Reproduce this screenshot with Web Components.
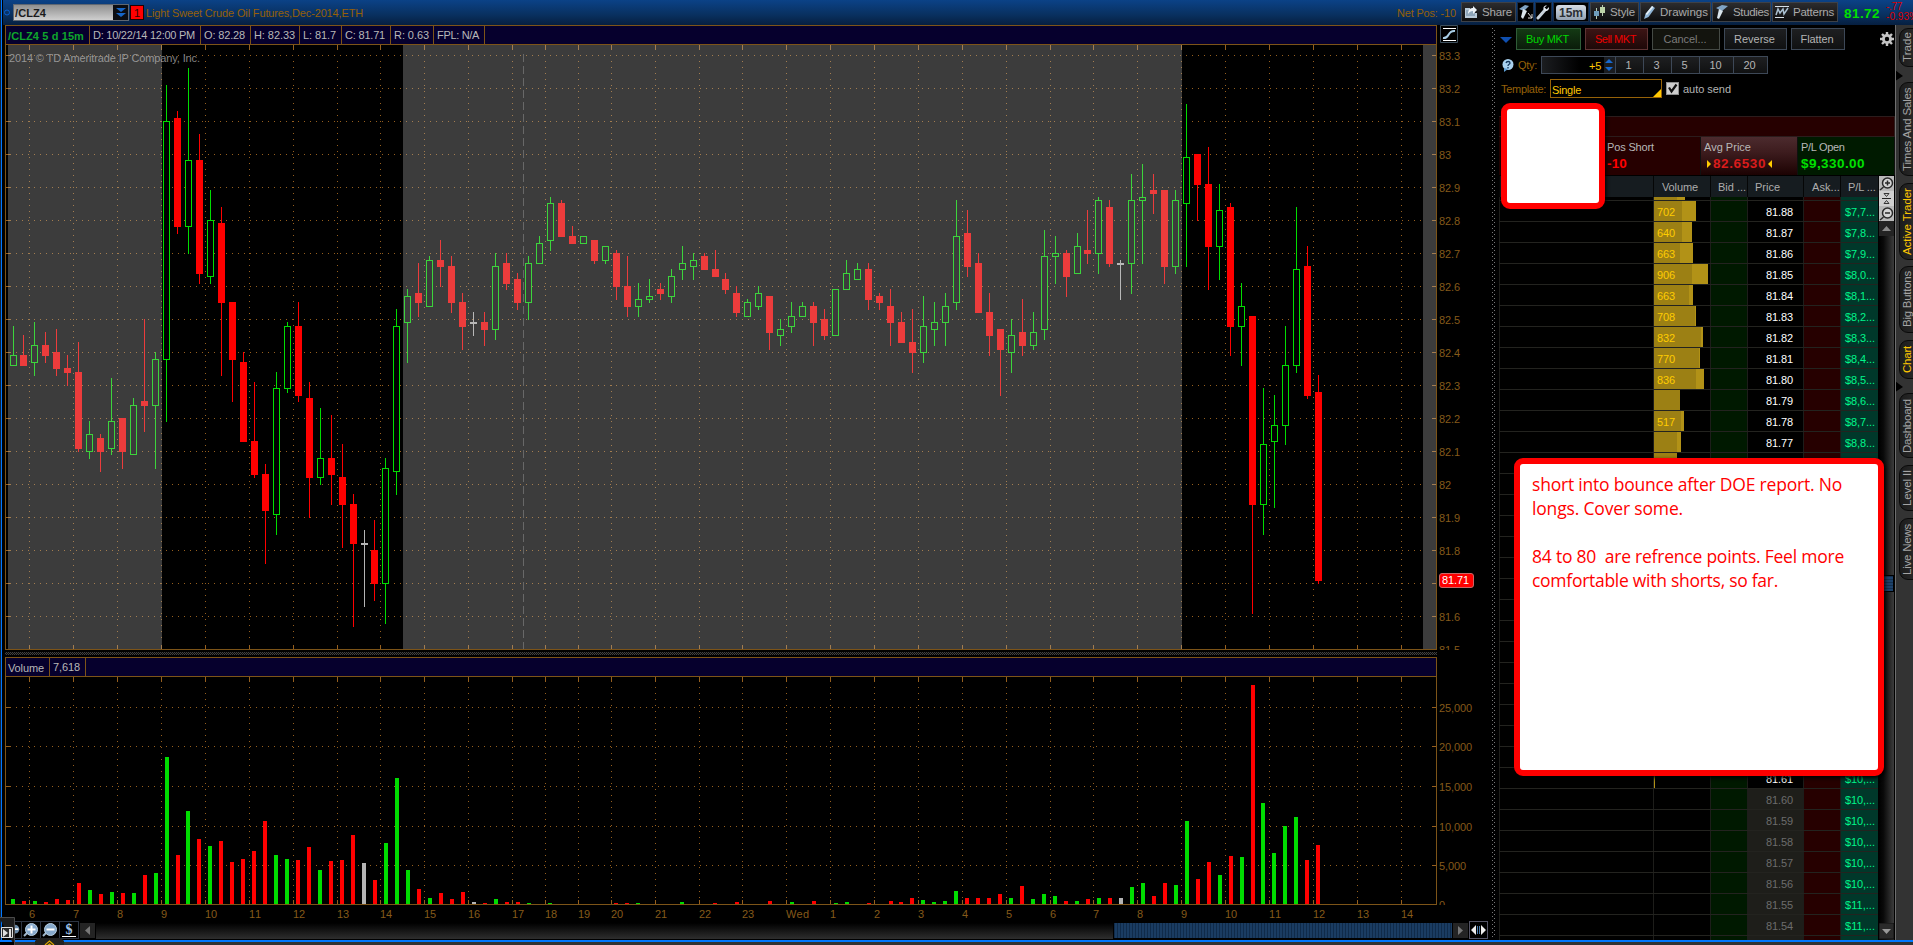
<!DOCTYPE html>
<html lang="en">
<head>
<meta charset="UTF-8">
<title>Chart - /CLZ4</title>
<style>
    html, body {
        margin: 0;
        background: #000;
    }

    body {
        width: 1913px;
        height: 945px;
        overflow: hidden;
        font: 11px "Liberation Sans", Arial, sans-serif;
        color: #b8b8b8;
        --line: #7d5418;
        --brown: #855a1a;
        --orange: #966008;
        --blue: #0078ff;
    }
</style>
</head>
<body>
<trade-app></trade-app>

<script>
    // each bar: [type, high, body top, body bottom, low, top of the volume bar (0 = none)]
    const bars = [
        ['g', 326, 355, 366, 366, 899], ['r', 335, 355, 366, 366, 901], ['g', 322, 345, 363, 376, 901],
        ['r', 332, 345, 356, 363, 902], ['r', 329, 352, 369, 376, 899], ['r', 355, 368, 373, 386, 900],
        ['r', 342, 372, 449, 452, 883], ['g', 421, 434, 452, 459, 890], ['r', 434, 438, 452, 472, 894],
        ['g', 378, 421, 449, 455, 892], ['r', 418, 418, 452, 469, 893], ['g', 398, 405, 455, 455, 893],
        ['r', 319, 401, 406, 432, 875], ['g', 352, 359, 406, 469, 873], ['g', 85, 121, 360, 422, 757],
        ['r', 111, 118, 227, 234, 855], ['g', 68, 160, 227, 254, 811], ['r', 134, 160, 274, 284, 839],
        ['g', 190, 220, 277, 284, 846], ['r', 207, 223, 303, 376, 841], ['r', 302, 302, 360, 402, 862],
        ['r', 352, 362, 442, 442, 859], ['r', 382, 441, 475, 478, 851], ['r', 464, 474, 511, 564, 821],
        ['g', 372, 388, 515, 535, 855], ['g', 322, 326, 389, 393, 859], ['r', 302, 326, 396, 402, 860],
        ['r', 382, 398, 478, 518, 847], ['g', 408, 458, 478, 485, 870], ['r', 415, 458, 475, 505, 861],
        ['r', 444, 477, 505, 548, 860], ['r', 494, 504, 544, 627, 835], ['d', 530, 543, 545, 607, 863],
        ['r', 520, 550, 584, 601, 880], ['g', 458, 468, 584, 624, 843], ['g', 309, 326, 472, 495, 778],
        ['g', 289, 296, 323, 363, 870], ['r', 263, 293, 303, 317, 889], ['g', 256, 260, 307, 307, 898],
        ['r', 240, 260, 267, 287, 893], ['r', 256, 266, 303, 313, 899], ['r', 293, 302, 327, 350, 892],
        ['d', 312, 322, 324, 336, 902], ['r', 312, 322, 330, 346, 903], ['g', 253, 266, 330, 340, 899],
        ['r', 253, 263, 284, 290, 902], ['r', 273, 279, 303, 310, 902], ['g', 256, 263, 303, 320, 903],
        ['g', 236, 243, 264, 264, 0], ['g', 197, 203, 241, 251, 903], ['r', 200, 203, 237, 237, 0],
        ['r', 226, 236, 244, 244, 0], ['g', 236, 236, 244, 244, 0], ['r', 240, 240, 261, 264, 0],
        ['g', 246, 246, 261, 264, 0], ['r', 250, 253, 287, 300, 903], ['r', 256, 286, 307, 317, 903],
        ['g', 283, 299, 307, 317, 903], ['g', 279, 296, 300, 303, 0], ['r', 283, 289, 294, 300, 0],
        ['g', 269, 276, 297, 303, 0], ['g', 246, 263, 270, 280, 902], ['g', 253, 260, 267, 280, 0],
        ['r', 253, 256, 270, 270, 0], ['r', 250, 269, 277, 277, 903], ['r', 273, 279, 290, 294, 0],
        ['r', 286, 293, 313, 317, 902], ['g', 299, 302, 317, 317, 0], ['g', 286, 293, 307, 310, 0],
        ['r', 296, 296, 333, 350, 901], ['g', 319, 329, 336, 346, 0], ['g', 302, 316, 327, 333, 902],
        ['g', 302, 306, 317, 317, 0], ['r', 302, 306, 323, 346, 901], ['r', 309, 319, 336, 340, 0],
        ['g', 289, 289, 336, 336, 903], ['g', 260, 273, 290, 290, 902], ['g', 263, 269, 280, 280, 0],
        ['r', 263, 269, 300, 310, 903], ['r', 293, 296, 303, 310, 0], ['r', 289, 306, 323, 346, 901],
        ['r', 312, 322, 343, 343, 902], ['r', 309, 342, 353, 373, 898], ['g', 296, 326, 353, 363, 900],
        ['g', 302, 322, 330, 346, 902], ['g', 293, 306, 323, 346, 901], ['g', 200, 236, 303, 310, 891],
        ['r', 210, 233, 267, 277, 898], ['r', 253, 263, 313, 313, 898], ['r', 293, 312, 336, 356, 898],
        ['r', 329, 329, 350, 396, 894], ['g', 319, 335, 353, 373, 898], ['r', 299, 332, 346, 356, 886],
        ['g', 312, 332, 346, 350, 899], ['g', 230, 256, 330, 340, 894], ['g', 236, 253, 257, 284, 896],
        ['r', 250, 253, 277, 297, 901], ['g', 233, 246, 274, 274, 901], ['r', 210, 250, 254, 264, 899],
        ['g', 197, 200, 254, 274, 898], ['r', 200, 207, 264, 267, 898], ['d', 260, 263, 265, 300, 898],
        ['g', 174, 200, 264, 294, 887], ['g', 164, 197, 201, 264, 883], ['r', 174, 190, 194, 214, 896],
        ['r', 190, 190, 267, 284, 883], ['g', 190, 200, 267, 274, 885], ['g', 104, 157, 204, 267, 821],
        ['r', 154, 154, 185, 221, 879], ['r', 147, 184, 247, 290, 862], ['g', 184, 210, 247, 280, 875],
        ['r', 203, 207, 327, 356, 856], ['g', 283, 306, 327, 366, 857], ['r', 316, 316, 505, 614, 685],
        ['g', 388, 444, 505, 535, 803], ['g', 395, 425, 442, 508, 853], ['g', 326, 365, 426, 445, 826],
        ['g', 207, 269, 366, 373, 817], ['r', 246, 266, 396, 399, 860], ['r', 375, 392, 581, 584, 845]
    ];

    const barColors = { g: '#00dd00', r: '#ff0000', d: '#b4b4b4' };

    const hours = [
        [29, '6'], [73, '7'], [117, '8'], [161, '9'], [205, '10'], [249, '11'], [293, '12'], [337, '13'],
        [380, '14'], [424, '15'], [468, '16'], [512, '17'], [545, '18'], [578, '19'], [611, '20'],
        [655, '21'], [699, '22'], [742, '23'], [786, 'Wed'], [830, '1'], [874, '2'], [918, '3'],
        [962, '4'], [1006, '5'], [1050, '6'], [1093, '7'], [1137, '8'], [1181, '9'], [1225, '10'],
        [1269, '11'], [1313, '12'], [1357, '13'], [1401, '14']
    ];

    // the bar pitch is a bit less than 11px
    const candleX = i => i === 0 ? 13 : 12 + 11 * i - Math.floor(i / 32.5);
    const volumeX = i => 11 + 11 * i - Math.floor((i + 16.5) / 32.5);

    // digits are 6px wide, points and commas 3px
    const numWidth = s => [...s].reduce((w, c) => w + (/[0-9]/.test(c) ? 6 : 3), 0);

    const rect = (x, y, w, h, fill) => `<rect x="${x}" y="${y}" width="${w}" height="${h}" fill="${fill}"/>`;

    function axisLabel(y, text) {
        return `<text x="1439" y="${y + 5}" textLength="${numWidth(text)}">${text}</text>`;
    }

    // dotted grid with ticks on the four sides
    function grid(top, bottom, rows, firstDot) {
        let s = '';
        hours.forEach(([x]) => {
            s += `<path d="M${x + .5} ${firstDot}V${bottom - 6}" stroke-dasharray="1 5"/>`;
            s += `<path d="M${x + .5} ${top}v5M${x + .5} ${bottom - 4}v4"/>`;
        });
        rows.forEach(y => {
            s += `<path d="M16 ${y + .5}H1423" stroke-dasharray="1 5"/>`;
            s += `<path d="M6 ${y + .5}h5M1432 ${y + .5}h4"/>`;
        });
        return `<g stroke="#965f1e" fill="none">${s}</g>`;
    }

    const svgStyle = `
        :host { display: block; }
        svg { display: block; shape-rendering: crispEdges; }
        text { font: 11px "Liberation Sans", Arial, sans-serif; fill: var(--brown); }
    `;

    // text that is spaced out or squeezed to a given width
    class FitLabel extends HTMLElement {
        constructor() {
            super();
            this.attachShadow({ mode: 'open' });
            this.shadowRoot.innerHTML = `
            <style>
                :host { display: inline-block; white-space: nowrap; }
                slot { white-space: pre; }
            </style>
            <slot></slot>
            `;
        }

        connectedCallback() {
            const ctx = document.createElement('canvas').getContext('2d');
            ctx.font = getComputedStyle(this).font;
            const text = this.textContent;
            const gap = (Number(this.getAttribute('w')) - ctx.measureText(text).width) / text.length;
            this.style.letterSpacing = gap.toFixed(3) + 'px';
        }
    }

    class ToolButton extends HTMLElement {
        constructor() {
            super();
            this.attachShadow({ mode: 'open' });
            this.shadowRoot.innerHTML = `
            <style>
                :host {
                    display: flex;
                    align-items: center;
                    box-sizing: border-box;
                    height: 20px;
                    padding-left: 2px;
                    gap: 4px;
                    border: 1px solid #3d4148;
                    background: linear-gradient(#2c2c2e, #0d0d0e);
                    font-size: 11.5px;
                    color: #a9a9a9;
                    overflow: hidden;
                }
                :host([dark]) { background: #000; border-color: #1b2c44; }
                ::slotted(svg) { flex: none; }
            </style>
            <slot></slot>
            `;
        }
    }

    class TopBar extends HTMLElement {
        constructor() {
            super();
            this.attachShadow({ mode: 'open' });
            this.shadowRoot.innerHTML = `
            <style>
                :host {
                    display: flex;
                    height: 25px;
                    box-sizing: border-box;
                    background: linear-gradient(#0b4287, #09305f 60%, #061f40);
                    color: var(--orange);
                }
                .dot { width: 10px; }
                .symbol {
                    display: flex;
                    box-sizing: border-box;
                    width: 116px;
                    height: 17px;
                    margin-top: 4px;
                    border: 1px solid #5f6772;
                    background: linear-gradient(#8f8f8f, #cfcfcf);
                    color: #1b1b1b;
                    font-weight: bold;
                }
                .symbol span { width: 100px; line-height: 17px; padding-left: 1px; box-sizing: border-box; }
                .symbol svg { background: #0b0d12; }
                .link {
                    width: 12px;
                    height: 13px;
                    margin: 5px 1px 0 1px;
                    border: 1px solid #200;
                    background: #f00;
                    color: #300;
                    text-align: center;
                    line-height: 14px;
                }
                .title { margin-left: 1px; line-height: 27px; flex: 1; }
                .net { line-height: 27px; margin-right: 5px; }
                .tools { display: flex; margin-top: 2px; gap: 1px; }
                .period {
                    display: block;
                    width: 30px;
                    height: 15px;
                    border-radius: 3px;
                    background: linear-gradient(#d5dde6, #93a2b2);
                    color: #2b2f35;
                    font: bold 12px/16px "Liberation Sans", Arial, sans-serif;
                    text-align: center;
                }
                .last { margin-left: 6px; width: 42px; color: #00e000; font: bold 13.5px/27px "Liberation Sans", Arial, sans-serif; }
                .change { width: 27px; overflow: hidden; color: #d00; font-size: 10px; line-height: 10px; padding-top: 2px; }
                .change fit-label { display: block; height: 10px; }
            </style>
            <svg class="dot" height="25"><circle cx="4" cy="12.5" r="2.5" fill="none" stroke="#0a5fd0"/></svg>
            <div class="symbol"><span><fit-label w="31">/CLZ4</fit-label></span>
                <svg width="15" height="15"><path d="M3 3h10l-5 4zM3 8h10l-5 4z" fill="#1666c8"/></svg>
            </div>
            <div class="link">1</div>
            <div class="title"><fit-label w="217">Light Sweet Crude Oil Futures,Dec-2014,ETH</fit-label></div>
            <div class="net"><fit-label w="59">Net Pos: -10</fit-label></div>
            <div class="tools">
                <tool-button style="width:55px">
                    <svg width="14" height="14"><path d="M1 3h5v2H3v6h8V8h2v5H1z" fill="#b9cad9"/><path d="M2 5h9v6H2z" fill="#8fa6ba"/><path d="M4 9c0-4 2-6 5-6V1l4 4-4 4V6C7 6 5 7 4 9z" fill="#eef3f7"/></svg>
                    <fit-label w="30">Share</fit-label>
                </tool-button>
                <tool-button dark style="width:17px;padding:0">
                    <svg width="15" height="16"><path d="M1 5l6-4 4 1-5 5z" fill="#7fa3c4"/><path d="M5 5l4 2-4 8-2-2z" fill="#d9e4ec"/><path d="M10 9l4 5M14 10v4h-4" stroke="#ddd" fill="none"/></svg>
                </tool-button>
                <tool-button dark style="width:17px;padding:0">
                    <svg width="15" height="16"><path d="M2 14l7-8" stroke="#c9d3dc" stroke-width="3" stroke-linecap="round"/><path d="M13 3l-2.500 2.500-2-2L11 1.500C8 1 6.500 4 8 6s5.500 1 5-3z" fill="#e5ebf0"/></svg>
                </tool-button>
                <tool-button dark style="width:36px"><span class="period">15m</span></tool-button>
                <tool-button style="width:49px">
                    <svg width="13" height="16"><path d="M3.500 4v11M9.500 1v11" stroke="#b6c9b0"/><path d="M1 7h5v5H1z" fill="#6f9dbb"/><path d="M7 3h5v6H7z" fill="#bcd3a8"/></svg>
                    <fit-label w="25">Style</fit-label>
                </tool-button>
                <tool-button style="width:71px">
                    <svg width="13" height="15"><path d="M1 14l1.500-5L9 1l3 2-6.500 9z" fill="#8fb5d6"/><path d="M2.500 9L9 1l1.500 1-6.500 8z" fill="#e3eef6"/></svg>
                    <fit-label w="48">Drawings</fit-label>
                </tool-button>
                <tool-button style="width:59px">
                    <svg width="14" height="16"><path d="M1 4l6-3 6 1-6 5z" fill="#7fa3c4"/><path d="M4 5l4 2-4 8-2-1z" fill="#d9e4ec"/></svg>
                    <fit-label w="36">Studies</fit-label>
                </tool-button>
                <tool-button style="width:66px">
                    <svg width="14" height="14"><path d="M0 1.500h14M0 12.500h9" stroke="#d5dde4"/><path d="M1 10l2-6 2 4 3-4 1 5 4-6" stroke="#a9bfd0" stroke-width="1.500" fill="none"/></svg>
                    <fit-label w="41">Patterns</fit-label>
                </tool-button>
            </div>
            <div class="last"><fit-label w="36">81.72</fit-label></div>
            <div class="change"><fit-label w="16">-.77</fit-label><fit-label w="32">-0.93%</fit-label></div>
            `;
        }
    }

    // row of boxed values above a plot
    class PlotHeader extends HTMLElement {
        constructor() {
            super();
            this.attachShadow({ mode: 'open' });
            this.shadowRoot.innerHTML = `
            <style>
                :host {
                    display: flex;
                    box-sizing: border-box;
                    width: 1432px;
                    height: 20px;
                    border: 1px solid var(--line);
                    background: #06002d;
                }
                ::slotted(span) {
                    box-sizing: border-box;
                    height: 18px;
                    line-height: 19px;
                    padding-left: 3px;
                    border-right: 1px solid var(--line);
                }
            </style>
            <slot></slot>
            `;
        }
    }

    class PriceChart extends HTMLElement {
        constructor() {
            super();
            this.attachShadow({ mode: 'open' });

            const rows = [];
            let labels = '';
            for (let i = 0; i <= 18; i++) {
                const y = 55 + 33 * i;
                if (i < 18) rows.push(y);
                // 81.7 is covered by the last price
                if (i !== 16) labels += axisLabel(y, String(Number((83.3 - i / 10).toFixed(1))));
            }

            const candles = bars.map(([type, high, top, bottom, low], i) => {
                const x = candleX(i);
                const color = barColors[type];
                if (type === 'g') {
                    return rect(x, high, 1, top - high, color) + rect(x, bottom, 1, low - bottom, color) +
                        `<rect x="${x - 2.5}" y="${top + .5}" width="6" height="${bottom - top - 1}" fill="#000" stroke="${color}"/>`;
                }
                return rect(x, high, 1, low - high, color) + rect(x - 3, top, 7, bottom - top, color);
            }).join('');

            // the night sessions are veiled by a grey layer
            const night = [[8, 154], [403, 779], [1423, 13]]
                .map(([x, w]) => rect(x, 45, w, 604, 'rgba(193,193,193,.31)')).join('');

            this.shadowRoot.innerHTML = `
            <style>${svgStyle}</style>
            <svg width="1484" height="605" viewBox="5 45 1484 605">
                ${grid(45, 649, rows, 61)}
                <path d="M523.5 54V649" stroke="#414141" stroke-dasharray="8 4"/>
                <text x="9" y="62" textLength="191" style="fill:#828282">2014 © TD Ameritrade IP Company, Inc.</text>
                ${candles}
                ${night}
                ${rect(5, 45, 1, 605, '#7d5418')}${rect(1436, 45, 1, 605, '#7d5418')}${rect(5, 649, 1432, 1, '#7d5418')}
                ${labels}
                <rect x="1439.500" y="573.500" width="34" height="14" rx="2.500" fill="#f00" stroke="#c66" shape-rendering="auto"/>
                <text x="1442" y="584" textLength="27" style="fill:#fff">81.71</text>
            </svg>
            `;
        }
    }

    class VolumeChart extends HTMLElement {
        constructor() {
            super();
            this.attachShadow({ mode: 'open' });

            const rows = [[707, '25,000'], [746, '20,000'], [786, '15,000'], [826, '10,000'], [865, '5,000']];
            const columns = bars.map((bar, i) => bar[5] ? rect(volumeX(i), bar[5], 4, 904 - bar[5], barColors[bar[0]]) : '').join('');

            this.shadowRoot.innerHTML = `
            <style>${svgStyle}</style>
            <svg width="1484" height="228" viewBox="5 677 1484 228">
                ${grid(677, 904, rows.map(r => r[0]), 687)}
                ${columns}
                ${rect(5, 677, 1, 228, '#7d5418')}${rect(1436, 677, 1, 228, '#7d5418')}${rect(5, 904, 1432, 1, '#7d5418')}
                ${rows.map(([y, t]) => axisLabel(y, t)).join('')}
                ${axisLabel(904, '0')}
            </svg>
            `;
        }
    }

    class TimeAxis extends HTMLElement {
        constructor() {
            super();
            this.attachShadow({ mode: 'open' });
            this.shadowRoot.innerHTML = `
            <style>${svgStyle}</style>
            <svg width="1484" height="16" viewBox="5 905 1484 16">
                ${hours.map(([x, t]) => `<text x="${x}" y="918" textLength="${t === 'Wed' ? 23 : numWidth(t)}">${t}</text>`).join('')}
            </svg>
            `;
        }
    }

    class TimeScroll extends HTMLElement {
        constructor() {
            super();
            this.attachShadow({ mode: 'open' });
            this.shadowRoot.innerHTML = `
            <style>
                :host { display: flex; height: 19px; margin: 0 4px 0 10px; }
                svg { display: block; flex: none; }
                .icon { box-sizing: border-box; width: 19px; height: 18px; border: 1px solid #2c3442; border-width: 1px 1px 1px 0; background: #000; }
                .icon.cut { width: 7px; }
                .arrow { width: 15px; height: 15px; margin: 2px 1px 0 1px; background: #242424; }
                .track { flex: 1; display: flex; justify-content: flex-end; margin-top: 2px; height: 16px; background: linear-gradient(#000, #2e2e2e); }
                .thumb { width: 338px; height: 15px; background: repeating-linear-gradient(90deg, #102b4a 0 1px, #1a3c62 1px 3px); box-shadow: 0 0 0 1px #000; }
            </style>
            <svg class="icon cut" viewBox="0 0 7 18"><circle cx="0" cy="8" r="5" fill="#6a8aa8"/><path d="M0 8h4" stroke="#fff" stroke-width="2"/></svg>
            <svg class="icon" viewBox="0 0 18 16"><path d="M5 11l-3 3" stroke="#9fb6cc" stroke-width="2"/><circle cx="9.500" cy="7.500" r="6" fill="#86a9cc" stroke="#b9d0e4"/><path d="M9.500 3.500v8M5.500 7.500h8" stroke="#fff" stroke-width="2"/></svg>
            <svg class="icon" viewBox="0 0 18 16"><path d="M5 11l-3 3" stroke="#9fb6cc" stroke-width="2"/><circle cx="9.500" cy="7.500" r="6" fill="#86a9cc" stroke="#b9d0e4"/><path d="M5.500 7.500h8" stroke="#fff" stroke-width="2"/></svg>
            <svg class="icon" viewBox="0 0 18 16"><text x="5.500" y="11.500" font-family="Liberation Serif, serif" font-weight="bold" font-size="14" fill="#9fc3e6">$</text><path d="M2 14.500h14" stroke="#fff"/></svg>
            <svg class="arrow" viewBox="0 0 15 15"><path d="M10 3v9L5 7.500z" fill="#777"/></svg>
            <div class="track"><div class="thumb"></div></div>
            <svg class="arrow" viewBox="0 0 15 15"><path d="M5 3v9l5-4.500z" fill="#777"/></svg>
            <svg class="icon" style="border-width:1px;border-color:#556" viewBox="0 0 17 16"><path d="M1 8l5-5v10zM16 8l-5-5v10z" fill="#eee"/><path d="M7.500 4v8M9.500 4v8" stroke="#4b7dae"/></svg>
            `;
        }
    }

    class ChartArea extends HTMLElement {
        constructor() {
            super();
            this.attachShadow({ mode: 'open' });
            this.shadowRoot.innerHTML = `
            <style>
                :host { display: flex; flex-direction: column; width: 1489px; padding-left: 2px; box-sizing: border-box; }
                .head { display: flex; gap: 3px; height: 20px; }
                .sym { color: #0fa52c; font-weight: bold; }
                .split {
                    width: 1432px;
                    height: 3px;
                    margin: 2px 0;
                    background: repeating-conic-gradient(#3f3f3f 0 25%, #0a0a0a 0 50%) 0 0 / 2px 2px;
                }
            </style>
            <div class="head">
                <plot-header>
                    <span class="sym" style="width:84px;padding-left:2px;line-height:21px"><fit-label w="76">/CLZ4 5 d 15m</fit-label></span>
                    <span style="width:111px"><fit-label w="102">D: 10/22/14 12:00 PM</fit-label></span>
                    <span style="width:50px"><fit-label w="41">O: 82.28</fit-label></span>
                    <span style="width:49px"><fit-label w="41">H: 82.33</fit-label></span>
                    <span style="width:42px"><fit-label w="33">L: 81.7</fit-label></span>
                    <span style="width:49px"><fit-label w="40">C: 81.71</fit-label></span>
                    <span style="width:43px"><fit-label w="35">R: 0.63</fit-label></span>
                    <span style="width:51px"><fit-label w="42">FPL: N/A</fit-label></span>
                </plot-header>
                <svg width="19" height="19"><path d="M.5.5h17v17H.5z" fill="#000" stroke="#3e4f5c"/><path d="M3 3.500h13M3 15.500h13" stroke="#fff"/><path d="M3 13c7 1 4-8 12-7" stroke="#a9cfe8" stroke-width="2" fill="none"/></svg>
            </div>
            <price-chart></price-chart>
            <div class="split"></div>
            <plot-header>
                <span style="width:44px;padding-left:2px;line-height:21px"><fit-label w="36">Volume</fit-label></span>
                <span style="width:36px"><fit-label w="27">7,618</fit-label></span>
            </plot-header>
            <volume-chart></volume-chart>
            <time-axis></time-axis>
            <time-scroll></time-scroll>
            `;
        }
    }

    // two staggered columns of dots
    class PanelGrip extends HTMLElement {
        constructor() {
            super();
            this.attachShadow({ mode: 'open' });
            this.shadowRoot.innerHTML = `
            <style>
                :host { display: block; width: 3px; margin: 3px 4px 2px 0; }
                svg { display: block; }
            </style>
            <svg width="3" height="910">
                <path d="M.5 0V910" stroke="#777" stroke-dasharray="1 3"/>
                <path d="M2.500 2V910" stroke="#777" stroke-dasharray="1 3"/>
            </svg>
            `;
        }
    }

    class OrderButton extends HTMLElement {
        constructor() {
            super();
            this.attachShadow({ mode: 'open' });
            this.shadowRoot.innerHTML = `
            <style>
                :host {
                    display: flex;
                    align-items: center;
                    justify-content: center;
                    box-sizing: border-box;
                    height: 22px;
                    padding-right: 2px;
                    border: 1px solid #3d4857;
                    background: linear-gradient(#1e1f21, #101112);
                    color: #b4b4b4;
                }
                :host([kind="buy"]) { background: linear-gradient(#143a14, #0a1c0a); border-color: #2f5c38; color: #00d800; }
                :host([kind="sell"]) { background: linear-gradient(#3c1414, #1e0808); border-color: #5e3434; color: #f00000; }
                :host([kind="off"]) { background: #13140e; border-color: #454a45; color: #7c7c7c; }
                :host([kind="qty"]) { height: 18px; border-left-width: 0; }
            </style>
            <slot></slot>
            `;
        }
    }

    class PriceLadder extends HTMLElement {
        constructor() {
            super();
            this.attachShadow({ mode: 'open' });

            // [label, full bar, darker part of the bar]
            const volumes = [
                ['702', 42, 28], ['640', 38, 28], ['663', 39, 26], ['906', 54, 38], ['663', 39, 35],
                ['708', 42, 41], ['832', 49, 47], ['770', 46, 45], ['836', 50, 42], ['', 26, 26],
                ['517', 30, 27], ['', 27, 23], ['', 23, 23]
            ];
            const entry = 8265.3;
            let rows = this.row('', ['', 31, 23], '', false);
            for (let i = 0; i < 35; i++) {
                const cents = 8188 - i;
                const profit = Math.round((entry - cents) * 100).toLocaleString('en-US');
                rows += this.row((cents / 100).toFixed(2), volumes[i] || ['', i === 27 ? 1 : 0, 0], '$' + profit.slice(0, 3) + '...', i > 27);
            }
            rows += this.row('', ['', 0, 0], '', true);

            this.shadowRoot.innerHTML = `
            <style>
                :host { display: block; height: 764px; overflow: hidden; width: 380px; }
                .row, .head {
                    display: grid;
                    grid-template-columns: 153px 56px 36px 55px 36px 37px;
                    column-gap: 1px;
                    padding-left: 1px;
                }
                .head { height: 21px; line-height: 23px; background: #050606; color: #adadad; }
                .head span { background: #161c20; padding-left: 8px; }
                .rows { height: 743px; overflow: hidden; }
                /* scrolled by most of the first row */
                .rows .row:first-child { margin-top: -17px; }
                .row { width: 378px; height: 20px; border-bottom: 1px solid #23231f; line-height: 22px; background: #1d1d1a; }
                .row > span { background: #000; overflow: hidden; white-space: nowrap; }
                .row > .bid { background: #001900; }
                .row > .ask { background: #260000; }
                .row > .pl { background: #00382a; color: #00f58a; padding-left: 4px; }
                .row > .price { color: #fff; text-align: right; padding-right: 10px; }
                .row.low > .price { background: #1e1e1a; color: #6c6c6c; }
                .bar { background: #b29217; height: 20px; }
                .bar div { box-sizing: border-box; height: 20px; background: #9c8014; color: #fc0; }
                .bar fit-label { margin-left: 3px; }
            </style>
            <div class="head">
                <span></span><span><fit-label w="36">Volume</fit-label></span><span style="padding-left:7px"><fit-label w="28">Bid ...</fit-label></span>
                <span style="padding-left:7px"><fit-label w="25">Price</fit-label></span>
                <span><fit-label w="28">Ask...</fit-label></span><span style="padding-left:7px"><fit-label w="28">P/L ...</fit-label></span>
            </div>
            <div class="rows">${rows}</div>
            `;
        }

        row(price, [label, full, dark], profit, low) {
            const fit = (w, t) => t ? `<fit-label w="${w}">${t}</fit-label>` : '';
            return `<div class="row ${low ? 'low' : ''}">
                <span></span>
                <span><div class="bar" style="width:${full}px"><div style="width:${dark}px">${fit(18, label)}</div></div></span>
                <span class="bid"></span>
                <span class="price">${fit(27, price)}</span>
                <span class="ask"></span>
                <span class="pl">${fit(30, profit)}</span>
            </div>`;
        }
    }

    class LadderScroll extends HTMLElement {
        constructor() {
            super();
            this.attachShadow({ mode: 'open' });
            this.shadowRoot.innerHTML = `
            <style>
                :host { display: flex; flex-direction: column; width: 15px; height: 764px; background: linear-gradient(90deg, #000, #0a0a0a 30%, #3c3c3c); }
                svg { display: block; }
                .thumb { margin-top: 338px; height: 15px; border: 1px solid #000; background: repeating-linear-gradient(#14304f 0 1px, #1d426b 1px 3px); }
                .gap { flex: 1; }
            </style>
            <svg width="15" height="45">
                <path d="M0 0h15v45H0z" fill="#b9b9b9"/>
                <path d="M0 15h15v15H0z" fill="#cfcfcf"/>
                <g fill="#d6d6d6" stroke="#2a2a2a" stroke-width="1.500">
                    <circle cx="8.500" cy="7" r="5"/><circle cx="8.500" cy="37" r="5"/>
                    <path d="M4.500 11L1 14M4.500 41L1 44"/>
                    <path d="M6 7h5M8.500 4.500v5M6 37h5"/>
                </g>
                <path d="M3 22.500h9" stroke="#222"/>
                <path d="M5 17.500h5l-2.500 3zM5 27.500h5l-2.500-3z" fill="none" stroke="#333"/>
            </svg>
            <svg width="15" height="16"><path d="M0 0h15v15H0z" fill="#242424"/><path d="M3 10h9L7.500 5z" fill="#8a8a8a"/></svg>
            <div class="thumb"></div>
            <div class="gap"></div>
            <svg width="15" height="17"><path d="M0 0h15v16H0z" fill="#2a2a2a" stroke="#111"/><path d="M3 6h9l-4.500 5z" fill="#999"/></svg>
            `;
        }
    }

    class ActiveTrader extends HTMLElement {
        constructor() {
            super();
            this.attachShadow({ mode: 'open' });
            this.shadowRoot.innerHTML = `
            <style>
                :host { display: block; width: 396px; }
                .line { display: flex; align-items: center; }
                .orders { height: 22px; padding: 3px 1px 0 1px; gap: 4px; }
                .orders .gear { margin-left: auto; }
                .qty { height: 18px; margin-top: 6px; padding-left: 3px; color: var(--orange); }
                .field {
                    box-sizing: border-box;
                    width: 63px;
                    height: 18px;
                    margin-left: 4px;
                    border: 1px solid #3d4857;
                    border-right: 0;
                    background: linear-gradient(90deg, #1b1d20, #000 60%);
                    color: #ffc800;
                    text-align: right;
                    line-height: 18px;
                    padding-right: 3px;
                }
                .spin { box-sizing: border-box; border: 1px solid #3d4857; border-width: 1px 1px 1px 0; background: #1a1c20; }
                .template { height: 19px; margin-top: 5px; padding-left: 2px; color: var(--orange); }
                .combo {
                    display: flex;
                    justify-content: space-between;
                    align-items: flex-end;
                    box-sizing: border-box;
                    width: 112px;
                    height: 19px;
                    margin: 0 4px;
                    border: 1px solid #966208;
                    color: #ffc800;
                    line-height: 14px;
                    padding-left: 1px;
                }
                .auto { color: #b4b4b4; margin-left: 4px; }
                .strip { height: 21px; margin-top: 18px; background: #260000; border: 1px solid #2b1c1c; border-left: 0; box-sizing: border-box; }
                .position { display: grid; grid-template-columns: 201px 96px 96px; gap: 1px; height: 38px; background: #101010; }
                .position div { background: #260000; padding: 4px 0 0 3px; line-height: 13px; }
                .position div:first-child { padding-left: 108px; }
                .position .avg { background: linear-gradient(#4c2b2e, #3d1c1e 40%, #1c0202); }
                .position .open { background: #001a00; }
                .position b { display: block; font-size: 13.5px; line-height: 20px; white-space: nowrap; }
                .book { display: flex; margin-top: 1px; }
            </style>
            <div class="line orders">
                <svg width="12" height="8" style="margin-top:2px"><path d="M0 1h12L6 7z" fill="#0f4fb0"/></svg>
                <order-button kind="buy" style="width:65px"><fit-label w="43">Buy MKT</fit-label></order-button>
                <order-button kind="sell" style="width:63px"><fit-label w="41">Sell MKT</fit-label></order-button>
                <order-button kind="off" style="width:68px"><fit-label w="43">Cancel...</fit-label></order-button>
                <order-button style="width:63px"><fit-label w="41">Reverse</fit-label></order-button>
                <order-button style="width:54px"><fit-label w="33">Flatten</fit-label></order-button>
                <svg class="gear" width="14" height="14" viewBox="-7 -7 14 14"><circle r="3.600" fill="none" stroke="#c4c4c4" stroke-width="2.800"/><path d="M0-7V-4M0 7V4M-7 0h3M7 0H4M-5-5l2.200 2.200M5 5L2.800 2.800M-5 5l2.200-2.200M5-5L2.800-2.800" stroke="#c4c4c4" stroke-width="2.400"/></svg>
            </div>
            <div class="line qty">
                <svg width="12" height="13"><circle cx="6" cy="5.500" r="5.500" fill="#a9d2f0"/><path d="M2 9l0 4 4-3z" fill="#5b9bd0"/><path d="M4 4c.5-2 4-2 4 0 0 1.500-2 1-2 3M6 8v1.500" stroke="#14385c" stroke-width="1.300" fill="none"/></svg>
                <fit-label w="19" style="margin-left:4px">Qty:</fit-label>
                <div class="field"><fit-label w="12">+5</fit-label></div>
                <svg class="spin" width="12" height="18" viewBox="0 0 11 16"><path d="M1 6h8L5 2zM1 10h8l-4 4z" fill="#1668d0"/></svg>
                <order-button kind="qty" style="width:28px">1</order-button>
                <order-button kind="qty" style="width:28px">3</order-button>
                <order-button kind="qty" style="width:28px">5</order-button>
                <order-button kind="qty" style="width:34px">10</order-button>
                <order-button kind="qty" style="width:34px">20</order-button>
            </div>
            <div class="line template">
                <fit-label w="45">Template:</fit-label>
                <div class="combo"><fit-label w="29">Single</fit-label><svg width="8" height="8"><path d="M8 0v8H0z" fill="#ffc800"/></svg></div>
                <svg width="13" height="13"><path d="M0 0h13v13H0z" fill="#8e8e8e"/><path d="M1 1h11v11H1z" fill="#cdcdcd"/><path d="M3 5.500L5.500 9.500 10.500 2.500" stroke="#111" stroke-width="2.200" fill="none"/></svg>
                <fit-label class="auto" w="48">auto send</fit-label>
            </div>
            <div class="strip"></div>
            <div class="position">
                <div><fit-label w="47">Pos Short</fit-label><b style="color:#f00"><fit-label w="20">-10</fit-label></b></div>
                <div class="avg"><fit-label w="47">Avg Price</fit-label><b style="color:#d81c1c;padding-left:3px"><svg width="4" height="8" style="margin-right:2px"><path d="M0 0l4 4-4 4z" fill="#fc0"/></svg><fit-label w="53">82.6530</fit-label><svg width="4" height="8" style="margin-left:2px"><path d="M4 0L0 4l4 4z" fill="#fc0"/></svg></b></div>
                <div class="open"><fit-label w="44">P/L Open</fit-label><b style="color:#00e000"><fit-label w="64">$9,330.00</fit-label></b></div>
            </div>
            <div class="book">
                <price-ladder></price-ladder>
                <ladder-scroll></ladder-scroll>
            </div>
            `;
        }
    }

    class SideTabs extends HTMLElement {
        constructor() {
            super();
            this.attachShadow({ mode: 'open' });

            // [text, gap above, height, text length, selected]
            const tabs = [
                ['Trade', 3, 39, 30, false], ['Times And Sales', 15, 94, 84, false], ['Active Trader', 7, 77, 67, true],
                ['Big Buttons', 6, 67, 56, false], ['Chart', 7, 39, 27, true], ['Dashboard', 14, 65, 54, false],
                ['Level II', 7, 46, 36, false], ['Live News', 7, 62, 51, false]
            ];

            this.shadowRoot.innerHTML = `
            <style>
                :host {
                    display: block;
                    position: relative;
                    width: 18px;
                    box-sizing: border-box;
                    border-left: 1px solid #6e6e6e;
                    background: #333;
                    overflow: hidden;
                }
                .tab {
                    display: flex;
                    box-sizing: border-box;
                    width: 24px;
                    margin-left: 3px;
                    padding-left: 1px;
                    border: 1px solid #0a0a0a;
                    border-radius: 9px;
                    background: linear-gradient(90deg, #1c1c1c, #2e2e2e);
                    color: #a4a4a4;
                }
                .tab.on { color: #ffc800; }
                .tab span {
                    display: flex;
                    align-items: center;
                    justify-content: center;
                    width: 12px;
                    writing-mode: vertical-rl;
                    transform: rotate(180deg);
                    font-size: 11.5px;
                    line-height: 12px;
                }
                .notch { position: absolute; left: -1px; }
            </style>
            ${tabs.map(([t, gap, h, len, on]) => `<div class="tab ${on ? 'on' : ''}" style="margin-top:${gap}px;height:${h}px"><span><fit-label w="${len}">${t}</fit-label></span></div>`).join('')}
            <svg class="notch" style="top:45px" width="9" height="12"><path d="M0 0l8 6-8 5z" fill="#000"/></svg>
            <svg class="notch" style="top:356px" width="9" height="12"><path d="M0 0l8 6-8 5z" fill="#000"/></svg>
            `;
        }
    }

    class NoteBox extends HTMLElement {
        constructor() {
            super();
            this.attachShadow({ mode: 'open' });
            this.shadowRoot.innerHTML = `
            <style>
                :host {
                    display: block;
                    position: absolute;
                    box-sizing: border-box;
                    border: 6px solid #f00;
                    border-radius: 9px;
                    background: #fff;
                    box-shadow: 1px 2px 4px #000;
                    color: #f00;
                    padding: 8px 0 0 12px;
                    font: 17.5px/24px "Open Sans", "Noto Sans", sans-serif;
                }
                ::slotted(fit-label) { display: block; height: 24px; }
                ::slotted(.para) { margin-top: 24px; }
            </style>
            <slot></slot>
            `;
        }
    }

    class TradeApp extends HTMLElement {
        constructor() {
            super();
            this.attachShadow({ mode: 'open' });
            this.shadowRoot.innerHTML = `
            <style>
                :host {
                    display: block;
                    position: relative;
                    width: 1913px;
                    height: 945px;
                    overflow: hidden;
                    box-sizing: border-box;
                    padding-left: 3px;
                    background: linear-gradient(90deg, #10223a 1px, var(--blue) 1px 2px, #000 2px);
                }
                .main { display: flex; height: 915px; }
                .foot { height: 3px; margin-left: -3px; border-top: 2px solid var(--blue); background: #333; }
                .dock { position: absolute; left: 0; top: 917px; }
                .up { position: absolute; left: 35px; top: 938px; }
            </style>
            <top-bar></top-bar>
            <div class="main">
                <chart-area></chart-area>
                <panel-grip></panel-grip>
                <active-trader></active-trader>
                <side-tabs></side-tabs>
            </div>
            <div class="foot"></div>
            <svg class="dock" width="15" height="28"><path d="M-1 .5h15.500V29" fill="#1c1c1c" stroke="#4a4a4a"/><path d="M1.500 10.500h11v10h-11z" fill="#2a2a2a" stroke="#ddd"/><path d="M3 12v8l5-4z" fill="#ddd"/><path d="M9 12h2v8H9z" fill="#ddd"/><path d="M0 25h14v3H0z" fill="#000"/></svg>
            <svg class="up" width="29" height="7"><path d="M0 7V3l3-3h23l3 3v4z" fill="#222"/><path d="M10 7l4.500-4L19 7M12 8l2.500-2L17 8" stroke="#e0a800" stroke-width="1.200" fill="none"/></svg>
            <note-box style="left:1501px;top:103px;width:104px;height:106px"></note-box>
            <note-box style="left:1514px;top:458px;width:370px;height:318px">
                <fit-label w="310">short into bounce after DOE report. No</fit-label>
                <fit-label w="151">longs. Cover some.</fit-label>
                <fit-label class="para" w="312">84 to 80  are refrence points. Feel more</fit-label>
                <fit-label w="246">comfortable with shorts, so far.</fit-label>
            </note-box>
            `;
        }
    }

    window.customElements.define('fit-label', FitLabel);
    window.customElements.define('tool-button', ToolButton);
    window.customElements.define('top-bar', TopBar);
    window.customElements.define('plot-header', PlotHeader);
    window.customElements.define('price-chart', PriceChart);
    window.customElements.define('volume-chart', VolumeChart);
    window.customElements.define('time-axis', TimeAxis);
    window.customElements.define('time-scroll', TimeScroll);
    window.customElements.define('chart-area', ChartArea);
    window.customElements.define('panel-grip', PanelGrip);
    window.customElements.define('order-button', OrderButton);
    window.customElements.define('price-ladder', PriceLadder);
    window.customElements.define('ladder-scroll', LadderScroll);
    window.customElements.define('active-trader', ActiveTrader);
    window.customElements.define('side-tabs', SideTabs);
    window.customElements.define('note-box', NoteBox);
    window.customElements.define('trade-app', TradeApp);
</script>
</body>
</html>
